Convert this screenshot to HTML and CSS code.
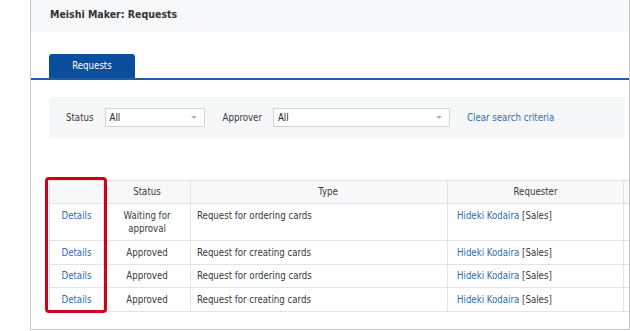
FILE: index.html
```html
<!DOCTYPE html>
<html>
<head>
<meta charset="utf-8">
<title>Meishi Maker: Requests</title>
<link rel="stylesheet" href="styles.css">
</head>
<body>

<div class="frame">

<div class="app-header">
<h1>Meishi Maker: Requests</h1>
</div>

<div class="tabs">
<div class="tab active">Requests</div>
</div>

<div class="content">

<div class="filters">
<label class="filter-label">Status</label>
<div class="select status-select"><span class="value">All</span><span class="caret"></span></div>
<label class="filter-label">Approver</label>
<div class="select approver-select"><span class="value">All</span><span class="caret"></span></div>
<a class="link clear-link" href="#">Clear search criteria</a>
</div>

<div class="results">
<table class="requests">
<colgroup>
<col class="col-details">
<col class="col-status">
<col class="col-type">
<col class="col-requester">
<col class="col-more">
</colgroup>
<thead>
<tr>
<th></th>
<th>Status</th>
<th class="type-head">Type</th>
<th>Requester</th>
<th></th>
</tr>
</thead>
<tbody>
<tr>
<td class="center"><a class="link" href="#">Details</a></td>
<td class="center">Waiting for approval</td>
<td>Request for ordering cards</td>
<td class="requester"><a class="link" href="#">Hideki Kodaira</a> [Sales]</td>
<td></td>
</tr>
<tr>
<td class="center"><a class="link" href="#">Details</a></td>
<td class="center">Approved</td>
<td>Request for creating cards</td>
<td class="requester"><a class="link" href="#">Hideki Kodaira</a> [Sales]</td>
<td></td>
</tr>
<tr>
<td class="center"><a class="link" href="#">Details</a></td>
<td class="center">Approved</td>
<td>Request for ordering cards</td>
<td class="requester"><a class="link" href="#">Hideki Kodaira</a> [Sales]</td>
<td></td>
</tr>
<tr>
<td class="center"><a class="link" href="#">Details</a></td>
<td class="center">Approved</td>
<td>Request for creating cards</td>
<td class="requester"><a class="link" href="#">Hideki Kodaira</a> [Sales]</td>
<td></td>
</tr>
</tbody>
</table>
<div class="highlight"></div>
</div>

</div>

</div>

</body>
</html>
```
FILE: styles.css
```css
body {
  margin: 0;
  background: #fff;
  font-family: "DejaVu Sans Condensed", "DejaVu Sans", sans-serif;
  font-size: 9.6px;
  color: #3a3a3a;
}

.frame {
  margin-left: 30px;
  width: 598px;
  height: 329px;
  border: 1px solid #c6c6c6;
  border-top: none;
  overflow: hidden;
}

.app-header {
  height: 32px;
  background: #f7f8fa;
  padding-left: 19px;
  box-sizing: border-box;
  padding-top: 8px;
}

.app-header h1 {
  margin: 0;
  font-size: 10.5px;
  line-height: 12px;
  font-weight: bold;
  color: #333;
}

.tabs {
  display: flex;
  padding: 22px 0 0 18px;
  border-bottom: 2px solid #1d5ea9;
}

.tab {
  width: 86px;
  height: 24px;
  line-height: 24px;
  text-align: center;
  border-radius: 3px 3px 0 0;
}

.tab.active {
  background: #0b4e9c;
  color: #fff;
}

.content {
  padding: 17px 0 0 18px;
}

.filters {
  display: flex;
  align-items: center;
  width: 576px;
  height: 41px;
  box-sizing: border-box;
  padding: 0 17px;
  background: #f6f7f9;
  border-radius: 3px;
}

.filter-label {
  margin-right: 11px;
}

.select {
  display: flex;
  align-items: center;
  justify-content: space-between;
  height: 19px;
  box-sizing: border-box;
  border: 1px solid #d4d4d4;
  background: #fff;
  padding: 0 7px 0 4px;
  color: #222;
}

.status-select {
  width: 100px;
  margin-right: 18px;
}

.approver-select {
  width: 177px;
  margin-right: 17px;
}

.caret {
  width: 0;
  height: 0;
  border-left: 3px solid transparent;
  border-right: 3px solid transparent;
  border-top: 3px solid #b3b3b3;
}

.link {
  color: #2e6db4;
  text-decoration: none;
}

.results {
  position: relative;
  margin-top: 42px;
}

.requests {
  border-collapse: collapse;
  table-layout: fixed;
  width: 680px;
}

.col-details { width: 54px; }
.col-status { width: 87px; }
.col-type { width: 257px; }
.col-requester { width: 176px; }
.col-more { width: 106px; }

.requests th,
.requests td {
  border: 1px solid #e3e3e3;
  line-height: 13.5px;
  vertical-align: top;
  text-align: left;
  padding: 4.5px 6px;
}

.requests th {
  background: #f7f8fa;
  font-weight: normal;
  text-align: center;
  padding: 4.25px 6px;
}

.requests th.type-head {
  padding-left: 24px;
}

.requests td.center {
  text-align: center;
}

.requests td.requester {
  padding-left: 9px;
}

.highlight {
  position: absolute;
  left: -4px;
  top: -3px;
  width: 56px;
  height: 130px;
  border: 3px solid #d0021b;
  border-radius: 4px;
}
```
